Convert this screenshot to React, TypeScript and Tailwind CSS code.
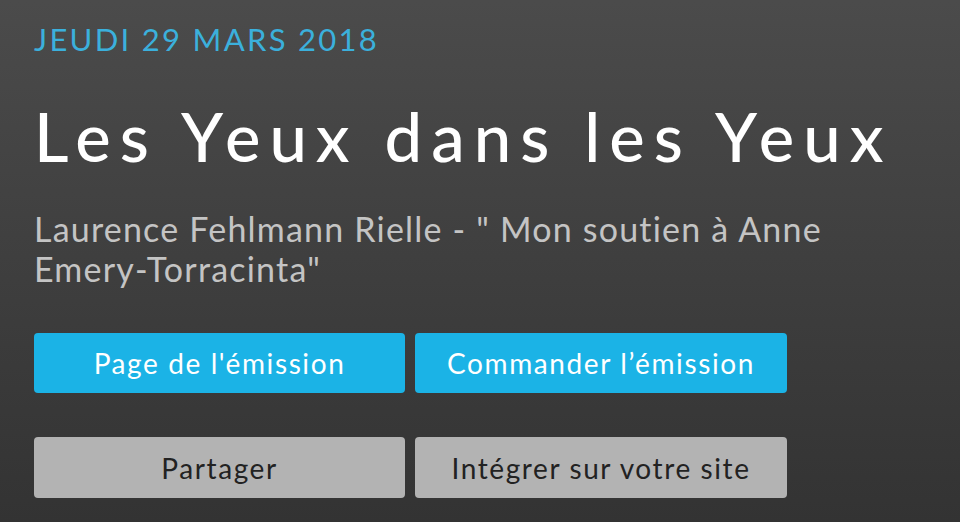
export default function App() {
  return (
    <div
      className="w-[960px] h-[522px] overflow-hidden bg-gradient-to-b from-[#4b4b4b] to-[#333333] px-[34px] pt-[19px]"
      style={{ fontFamily: 'Lato, "Open Sans", sans-serif' }}
    >
      <div className="text-[31px] leading-[40px] text-[#3bb0dc] tracking-[2.3px]">JEUDI 29 MARS 2018</div>
      <h1 className="mt-[42px] text-[67px] leading-[70px] text-white tracking-[9px] font-medium whitespace-nowrap">
        Les Yeux dans les Yeux
      </h1>
      <p className="mt-[38px] text-[34px] leading-[40px] text-[#c4c4c4] tracking-[1.2px] w-[830px]">
        Laurence Fehlmann Rielle - " Mon soutien à Anne Emery-Torracinta"
      </p>
      <div className="mt-[44px] grid grid-cols-[371px_372px] gap-x-[10px] gap-y-[44px] text-[28px] tracking-[1.6px]">
        <button className="h-[60px] rounded-[4px] bg-[#1bb3e6] text-white">Page de l'émission</button>
        <button className="h-[60px] rounded-[4px] bg-[#1bb3e6] text-white">Commander l’émission</button>
        <button className="h-[61px] rounded-[4px] bg-[#b3b3b3] text-[#222]">Partager</button>
        <button className="h-[61px] rounded-[4px] bg-[#b3b3b3] text-[#222]">Intégrer sur votre site</button>
      </div>
    </div>
  );
}
